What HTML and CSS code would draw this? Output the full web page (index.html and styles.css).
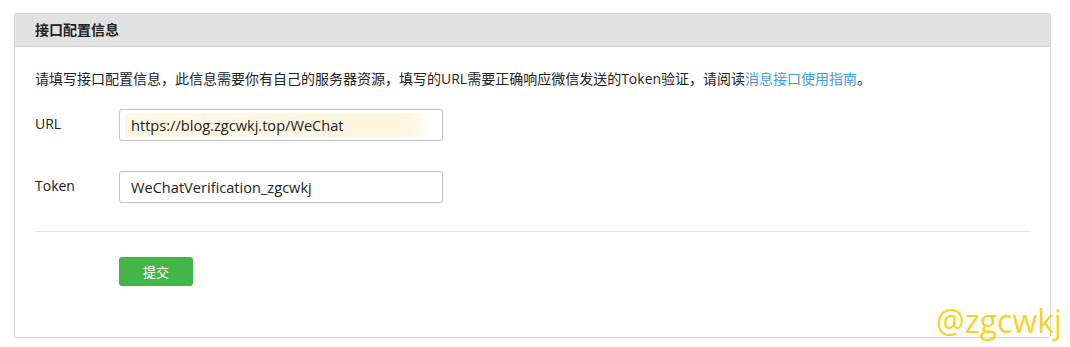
FILE: index.html
```html
<html>
    <head>
        <meta charset="utf-8">
        <link rel="stylesheet" href="styles.css">
    </head>
    <body>
        <div class="panel">
            <div class="panel-head">接口配置信息</div>
            <div class="panel-body">
                <p class="intro">请填写接口配置信息，此信息需要你有自己的服务器资源，填写的URL需要正确响应微信发送的Token验证，请阅读<a href="#">消息接口使用指南</a>。</p>
                <div class="row">
                    <label for="url">URL</label>
                    <input type="text" id="url" class="field masked" value="https://blog.zgcwkj.top/WeChat">
                </div>
                <div class="row">
                    <label for="token">Token</label>
                    <input type="text" id="token" class="field" value="WeChatVerification_zgcwkj">
                </div>
                <hr class="divider">
                <div class="actions">
                    <button class="submit">提交</button>
                </div>
            </div>
        </div>
        <div class="watermark">@zgcwkj</div>
    </body>
</html>
```

FILE: styles.css
```css
body {
    margin: 0;
    background-color: #ffffff;
    font-family: "Open Sans", "Noto Sans CJK SC", sans-serif;
    color: #222222;
}
.panel {
    margin: 13px 0 0 14px;
    width: 1037px;
    height: 325px;
    border: 1px solid #d9d9d9;
    border-radius: 2px;
    box-sizing: border-box;
}
.panel-head {
    height: 33px;
    line-height: 32px;
    padding-left: 20px;
    background-color: #e2e2e2;
    border-bottom: 1px solid #d0d0d0;
    font-size: 14px;
    font-weight: bold;
    box-sizing: border-box;
}
.panel-body {
    padding: 0 19px 0 20px;
}
.intro {
    margin: 22px 0 21px 0;
    font-size: 14px;
    line-height: 19px;
}
.intro a {
    color: #459ae9;
    text-decoration: none;
}
.row {
    display: flex;
    align-items: center;
    height: 32px;
    margin-bottom: 30px;
}
.row label {
    width: 84px;
    font-size: 14px;
    margin-top: -3px;
}
.field {
    width: 324px;
    height: 32px;
    border: 1px solid #c4c4c4;
    border-radius: 3px;
    padding: 0 11px;
    box-sizing: border-box;
    font-family: "Open Sans", "Noto Sans CJK SC", sans-serif;
    font-size: 14.6px;
    color: #222222;
    outline: none;
}
.masked {
    background: linear-gradient(to right, #fdf7e4 0, #fdf6e0 90%, #ffffff 96%);
    background-clip: content-box;
    padding: 3px 11px 3px 5px;
    text-indent: 6px;
}
.divider {
    border: 0;
    border-top: 1px solid #e2e2e2;
    margin: -2px 0 25px 0;
}
.actions {
    padding-left: 84px;
}
.submit {
    width: 74px;
    height: 29px;
    border: 0;
    border-radius: 3px;
    background-color: #44b549;
    color: #ffffff;
    font-family: "Noto Sans CJK SC", sans-serif;
    font-size: 13px;
}
.watermark {
    position: absolute;
    left: 936px;
    top: 299px;
    font-family: "Open Sans", sans-serif;
    font-size: 32px;
    color: #f6d32a;
}
```
